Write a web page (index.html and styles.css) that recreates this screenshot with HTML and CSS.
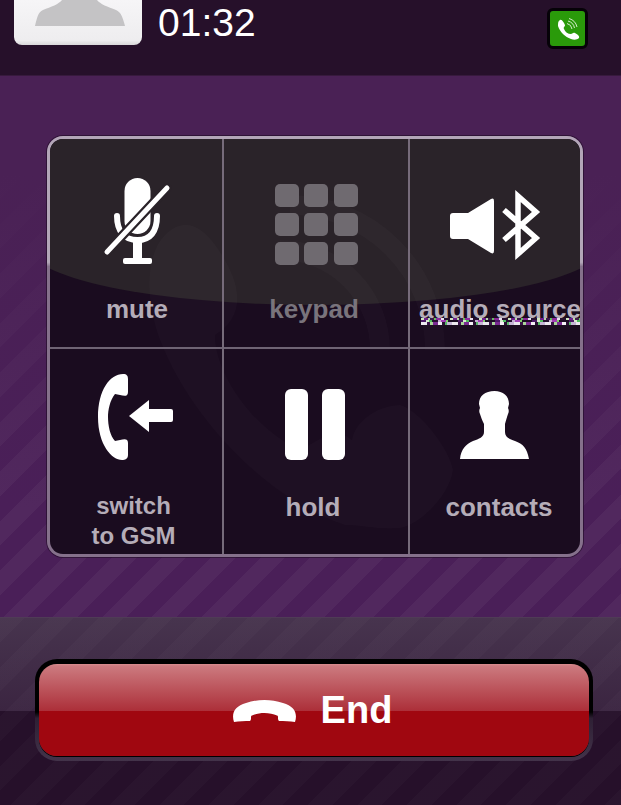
FILE: index.html
```html
<!DOCTYPE html>
<html lang="en">
<head>
<meta charset="utf-8">
<title>Call</title>
<link rel="stylesheet" href="styles.css">
</head>
<body>
<div class="screen">
  <header class="header">
    <div class="avatar">
      <svg class="avatar-shape" viewBox="0 0 128 45" width="128" height="45"><path d="M21 26 C23 18 24 12 29 10 C37 7 45 4 48 0 H83 C86 4 94 7 102 10 C107 12 109 18 111 26Z"/></svg>
    </div>
    <div class="time">01:32</div>
    <div class="call-badge">
      <svg viewBox="0 0 35 35" width="35" height="35"><path class="fill-white" d="M10 9 C12 8 14 12 15 14 C15 16 13 16 14 18 C15 21 18 23 21 23 C22 23 23 21 25 22 C27 23 30 25 29 27 C27 29 24 29 21 28 C15 26 10 21 8 15 C8 12 8 10 10 9Z"/><path class="arc" d="M17 12.500 A6.500 6.500 0 0 1 22 18"/><path class="arc" d="M18 10 A9 9 0 0 1 24.500 17"/><path class="arc" d="M19 7.500 A11.500 11.500 0 0 1 27 16"/></svg>
    </div>
  </header>

  <main class="main">
    <section class="panel">
      <div class="panel-inner">
        <div class="gloss"></div>
        <svg class="watermark" viewBox="50 139 531 415" width="531" height="415">
          <path class="wm-fill" d="M165 235 C185 215 205 225 225 260 C245 295 240 320 215 335 C215 375 255 430 300 450 C320 440 335 425 352 440 C355 420 380 405 400 405 C420 410 450 450 453 470 C450 495 420 525 400 528 C380 530 360 525 345 525 C280 505 195 430 160 340 C145 300 145 255 165 235Z"/>
          <path class="wm-arc" d="M280 250 A100 100 0 0 1 380 350"/>
          <path class="wm-arc" d="M290 205 A145 145 0 0 1 435 350"/>
        </svg>
        <div class="grid">
          <div class="cell row-one col-rule">
            <svg class="icon" viewBox="100 176 72 90" width="72" height="90">
              <rect class="fill-white" x="124.500" y="178" width="26" height="56" rx="13"/>
              <path class="cradle" d="M117 216 C117 232 125 240 137.500 240 C150 240 157 232 157 216"/>
              <rect class="fill-white" x="133" y="240" width="9" height="20"/>
              <rect class="fill-white" x="123" y="258" width="29" height="6" rx="2"/>
              <line class="slash-gap" x1="167" y1="188" x2="107" y2="252"/>
              <line class="slash" x1="167" y1="188" x2="107" y2="252"/>
            </svg>
            <span class="label label-one nudge-mute">mute</span>
          </div>
          <div class="cell row-one col-rule">
            <div class="keypad">
              <span></span><span></span><span></span>
              <span></span><span></span><span></span>
              <span></span><span></span><span></span>
            </div>
            <span class="label label-one label-dim nudge-keypad">keypad</span>
          </div>
          <div class="cell row-one">
            <svg class="icon" viewBox="446 176 99 90" width="99" height="90">
              <path class="fill-white" d="M450 216 Q450 213 453 213 L468 213 L491 199 Q494 197.500 494 201 V251 Q494 254.500 491 253 L468 239 H453 Q450 239 450 236Z"/>
              <path class="bt" d="M504 210 L536 238 L518 254 V196 L536 212 L504 240"/>
            </svg>
            <span class="label label-one nudge-audio">audio source</span>
            <div class="noise"></div>
          </div>
          <div class="cell row-two col-rule">
            <svg class="icon" viewBox="96 371 80 90" width="80" height="90">
              <path class="fill-white" d="M123 374 C127 374 128 376 128 379 L128 392 C128 397 124 396 120 395 L115 394 C110 400 108 410 108 417 C108 425 110 436 115 441 L120 440 C124 439 128 438 128 443 L128 455 C128 459 125 460 122 460 C112 460 98 445 98 417 C98 390 110 374 123 374Z"/>
              <path class="fill-white" d="M129 416 L149 400 V409 H171 Q173 409 173 411 V420 Q173 422 171 422 H149 V432Z"/>
            </svg>
            <span class="label label-switch nudge-switch">switch<br>to GSM</span>
          </div>
          <div class="cell row-two col-rule">
            <svg class="icon" viewBox="276 371 80 90" width="80" height="90">
              <rect class="fill-white" x="285" y="389" width="23" height="71" rx="6"/>
              <rect class="fill-white" x="322" y="389" width="23" height="71" rx="6"/>
            </svg>
            <span class="label label-two nudge-hold">hold</span>
          </div>
          <div class="cell row-two">
            <svg class="icon" viewBox="450 371 91 90" width="91" height="90">
              <path class="fill-white" d="M494.500 391 C503 391 509 396 509 404 L508 408 C509 410 509 412 508 414 C507 417 506 420 505 424 V432 C505 437 509 439 515 441 C523 444 527 448 529 459 H460 C461 449 466 444 473 441 C479 439 484 437 484 432 V424 C482 420 481 417 480 414 C479 412 479 410 480 408 L479 404 C479 396 485 391 494.500 391Z"/>
            </svg>
            <span class="label label-two nudge-contacts">contacts</span>
          </div>
        </div>
      </div>
    </section>
  </main>

  <footer class="footer">
    <div class="end-well">
      <button class="end-button" type="button">
        <svg viewBox="0 0 65 22" width="65" height="22"><path class="fill-white" d="M2 22 C-1 13 3 6 14 3 C26 -1 39 -1 51 3 C62 6 66 13 63 22 C58 21 52 21 47 21 C45 19 47 16 45 15.500 C38 12 27 12 20 15.500 C18 16 20 19 18 21 C13 21 7 21 2 22Z"/></svg>
        <span class="end-text">End</span>
      </button>
    </div>
  </footer>
</div>
</body>
</html>
```

FILE: styles.css
```css
* { box-sizing: border-box; }

html, body {
  margin: 0;
  padding: 0;
  background: #26102a;
}

.screen {
  width: 621px;
  height: 805px;
  overflow: hidden;
  display: flex;
  flex-direction: column;
  font-family: "Liberation Sans", Arial, sans-serif;
}

.fill-white { fill: #fff; }

/* header */
.header {
  flex: 0 0 76px;
  display: flex;
  align-items: flex-start;
  padding-left: 14px;
  background: #26102a;
  border-bottom: 1px solid #371a3d;
}

.avatar {
  width: 128px;
  height: 45px;
  border-radius: 0 0 8px 8px;
  background: linear-gradient(#f6f5f7, #eeedef 90%, #d9d8da);
}

.avatar-shape { display: block; fill: #c4c3c5; }

.time {
  margin: 1px 0 0 16px;
  font-size: 39px;
  line-height: 44px;
  color: #fff;
}

.call-badge {
  margin: 8px 33px 0 auto;
  width: 41px;
  height: 41px;
  border: 3px solid #060208;
  border-radius: 6px;
  background: #2a9a0a;
}

.call-badge svg { display: block; }

.arc {
  fill: none;
  stroke: #e6f5df;
  stroke-width: 0.9;
}

/* main */
.main {
  flex: 0 0 541px;
  padding: 60px 38px 0 47px;
  background:
    linear-gradient(#4a2155 0, #4a2155 18%, rgba(74, 33, 85, 0) 80%),
    repeating-linear-gradient(135deg, #51285e 0, #51285e 17px, #4a1f58 17px, #4a1f58 35px);
}

.panel {
  width: 536px;
  height: 421px;
  padding: 3px;
  border-radius: 16px;
  background: linear-gradient(#b3a6b8 0, #b3a6b8 30%, #85718b 31%, #85718b 100%);
  box-shadow: 0 0 0 1px rgba(30, 10, 35, 0.6);
}

.panel-inner {
  position: relative;
  width: 530px;
  height: 415px;
  border-radius: 13px;
  overflow: hidden;
  background: #1a0c1f;
}

.gloss {
  position: absolute;
  top: 0;
  left: -25px;
  width: 580px;
  height: 166px;
  border-radius: 0 0 290px 290px / 0 0 61px 61px;
  background: #2a2329;
}

.watermark {
  position: absolute;
  top: 0;
  left: 0;
}

.wm-fill { fill: rgba(255, 255, 255, 0.018); }

.wm-arc {
  fill: none;
  stroke: rgba(255, 255, 255, 0.018);
  stroke-width: 20;
}

.grid {
  position: relative;
  display: grid;
  grid-template-columns: 174px 186px 170px;
  grid-template-rows: 210px 205px;
  height: 415px;
}

.cell {
  position: relative;
  display: flex;
  flex-direction: column;
  align-items: center;
}

.row-one {
  padding-top: 37px;
  border-bottom: 2px solid #6f6474;
}

.row-two { padding-top: 22px; }

.col-rule { border-right: 2px solid #766b7a; }

.icon {
  display: block;
  flex: none;
}

.cradle {
  fill: none;
  stroke: #fff;
  stroke-width: 6;
  stroke-linecap: round;
}

.slash-gap {
  stroke: #2a2329;
  stroke-width: 9.500;
  stroke-linecap: round;
}

.slash {
  stroke: #fff;
  stroke-width: 5;
  stroke-linecap: round;
}

.bt {
  fill: none;
  stroke: #fff;
  stroke-width: 5.500;
}

.keypad {
  display: grid;
  grid-template-columns: repeat(3, 24px);
  grid-template-rows: repeat(3, 23px);
  gap: 6px 5.500px;
  height: 90px;
  padding-top: 8px;
  flex: none;
}

.keypad span {
  display: block;
  background: #6f6a70;
  border-radius: 5px;
}

.label {
  font-size: 26px;
  font-weight: 700;
  line-height: 30px;
  color: #b5adb8;
  text-align: center;
  white-space: nowrap;
}

.label-one { margin-top: 28px; }
.label-two { margin-top: 31px; }
.label-switch { margin-top: 30px; font-size: 24px; }
.label-dim { color: #79747c; }

.nudge-mute { margin-left: 2px; }
.nudge-keypad { margin-right: 4px; }
.nudge-audio { margin-left: 10px; }
.nudge-switch { margin-right: 5px; }
.nudge-hold { margin-right: 6px; }
.nudge-contacts { margin-left: 8px; }

.noise {
  position: absolute;
  top: 179px;
  left: 11px;
  width: 161px;
  height: 7px;
  background:
    repeating-linear-gradient(90deg, #cfe6c0 0 3px, #6d1f8c 3px 7px, #b8d8a8 7px 9px, #3c1a4c 9px 13px, #62c060 13px 15px, #8a2a9a 15px 20px, #e8e2ee 20px 23px, #26102f 23px 29px) 0 0 / 100% 2px no-repeat,
    repeating-linear-gradient(90deg, #4b1a66 0 5px, #d8ead0 5px 8px, #4fbf5d 8px 11px, #251030 11px 17px, #c4b0d2 17px 20px, #a23fb5 20px 25px, #7fd06a 25px 27px, #1b0d22 27px 37px) 0 2px / 100% 2px no-repeat,
    repeating-linear-gradient(90deg, #ece9ef 0 6px, #3a1348 6px 9px, #a9d89a 9px 12px, #7a2b92 12px 17px, #f3f1f5 17px 21px, #2a1133 21px 24px, #58b868 24px 26px, #c7b6d6 26px 31px) 0 4px / 100% 3px no-repeat;
}

/* footer */
.footer {
  flex: 0 0 188px;
  padding: 41px 28px 0 35px;
  background:
    repeating-linear-gradient(135deg, rgba(255, 255, 255, 0.018) 0, rgba(255, 255, 255, 0.018) 17px, transparent 17px, transparent 35px),
    linear-gradient(#47344e 0, #3b2541 93px, #26102a 93px, #26102a 100%);
  border-top: 1px solid #4f3b56;
}

.end-well {
  width: 558px;
  height: 102px;
  padding: 5px 4px 5px 4px;
  border-radius: 22px;
  background: linear-gradient(#000 0, #000 52%, #2e2034 58%, #43334a 100%);
}

.end-button {
  display: flex;
  align-items: center;
  justify-content: center;
  gap: 24px;
  width: 550px;
  height: 92px;
  margin: 0;
  padding: 0 4px 0 0;
  border: 0;
  border-radius: 18px;
  background: linear-gradient(#d98d90 0, #cc7a7f 2px, #ac2f39 51%, #a00710 51%, #a00710 100%);
  box-shadow: 0 1px 0 #000;
  font-family: inherit;
}

.end-button svg {
  display: block;
  flex: none;
  margin-top: 1px;
}

.end-text {
  font-size: 38px;
  font-weight: 700;
  line-height: 44px;
  color: #fff;
}
```
